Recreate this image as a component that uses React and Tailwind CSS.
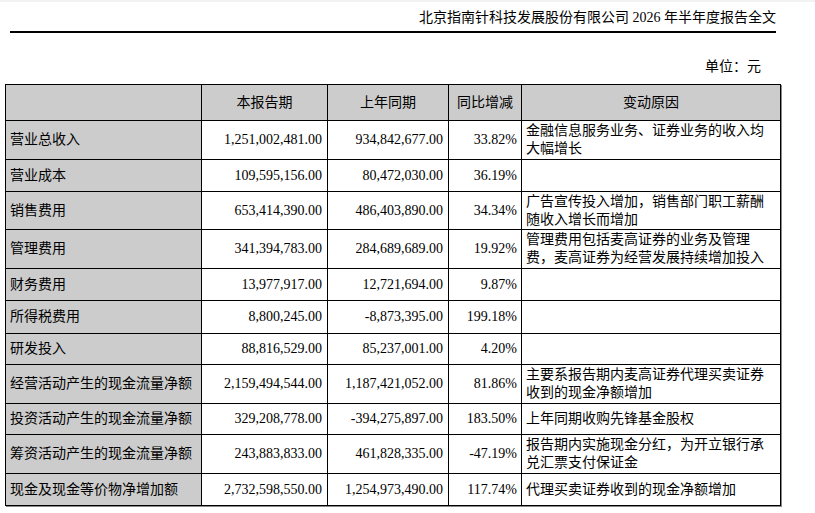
const rows = [
  { name: "营业总收入", cur: "1,251,002,481.00", prev: "934,842,677.00", pct: "33.82%", reason: "金融信息服务业务、证券业务的收入均大幅增长", h: "h-[39px]" },
  { name: "营业成本", cur: "109,595,156.00", prev: "80,472,030.00", pct: "36.19%", reason: "", h: "h-[32px]" },
  { name: "销售费用", cur: "653,414,390.00", prev: "486,403,890.00", pct: "34.34%", reason: "广告宣传投入增加，销售部门职工薪酬随收入增长而增加", h: "h-[38px]" },
  { name: "管理费用", cur: "341,394,783.00", prev: "284,689,689.00", pct: "19.92%", reason: "管理费用包括麦高证券的业务及管理费，麦高证券为经营发展持续增加投入", h: "h-[39px]" },
  { name: "财务费用", cur: "13,977,917.00", prev: "12,721,694.00", pct: "9.87%", reason: "", h: "h-[32px]" },
  { name: "所得税费用", cur: "8,800,245.00", prev: "-8,873,395.00", pct: "199.18%", reason: "", h: "h-[33px]" },
  { name: "研发投入", cur: "88,816,529.00", prev: "85,237,001.00", pct: "4.20%", reason: "", h: "h-[31px]" },
  { name: "经营活动产生的现金流量净额", cur: "2,159,494,544.00", prev: "1,187,421,052.00", pct: "81.86%", reason: "主要系报告期内麦高证券代理买卖证券收到的现金净额增加", h: "h-[39px]" },
  { name: "投资活动产生的现金流量净额", cur: "329,208,778.00", prev: "-394,275,897.00", pct: "183.50%", reason: "上年同期收购先锋基金股权", h: "h-[31px]" },
  { name: "筹资活动产生的现金流量净额", cur: "243,883,833.00", prev: "461,828,335.00", pct: "-47.19%", reason: "报告期内实施现金分红，为开立银行承兑汇票支付保证金", h: "h-[39px]" },
  { name: "现金及现金等价物净增加额", cur: "2,732,598,550.00", prev: "1,254,973,490.00", pct: "117.74%", reason: "代理买卖证券收到的现金净额增加", h: "h-[32px]" },
];

export default function App() {
  return (
    <div className="w-[815px] h-[513px] bg-white overflow-hidden text-black text-[14px] font-['Liberation_Serif','Noto_Sans_CJK_SC',serif]">
      <div className="h-[2px] bg-[#f2f2f2]" />

      {/* page header */}
      <div className="mt-[6px] pr-[39px] text-right leading-[20px]">
        北京指南针科技发展股份有限公司 2026 年半年度报告全文
      </div>
      <div className="mt-[3px] ml-[10px] w-[766px] h-[2px] bg-black" />

      <div className="mt-[24px] pr-[54px] text-right leading-[20px]">单位：元</div>

      <table className="mt-[7px] ml-[5px] w-[775px] table-fixed border-collapse shadow-[1px_1px_0_#8a8a8a] leading-[18px]">
        <colgroup>
          <col className="w-[196px]" />
          <col className="w-[126px]" />
          <col className="w-[121px]" />
          <col className="w-[73px]" />
          <col className="w-[259px]" />
        </colgroup>
        <thead>
          <tr className="h-[36px] bg-[#cccccc]">
            <th className="border border-black font-normal" />
            <th className="border border-black font-normal text-center">本报告期</th>
            <th className="border border-black font-normal text-center">上年同期</th>
            <th className="border border-black font-normal text-center">同比增减</th>
            <th className="border border-black font-normal text-center">变动原因</th>
          </tr>
        </thead>
        <tbody>
          {rows.map((r) => (
            <tr key={r.name} className={r.h}>
              <td className="border border-black bg-[#cccccc] pl-[4px] whitespace-nowrap align-middle">{r.name}</td>
              <td className="border border-black pr-[5px] text-right align-middle">{r.cur}</td>
              <td className="border border-black pr-[5px] text-right align-middle">{r.prev}</td>
              <td className="border border-black pr-[4px] text-right align-middle">{r.pct}</td>
              <td className="border border-black pl-[4px] pr-[4px] align-middle">{r.reason}</td>
            </tr>
          ))}
        </tbody>
      </table>
    </div>
  );
}
